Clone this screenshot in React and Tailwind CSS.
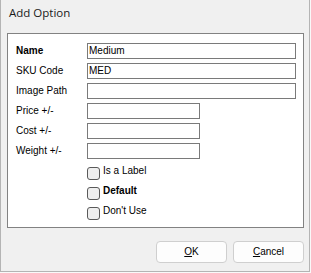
import React from 'react';

const fields = [
  { label: 'Name', value: 'Medium', bold: true, wide: true },
  { label: 'SKU Code', value: 'MED', wide: true },
  { label: 'Image Path', value: '', wide: true },
  { label: 'Price +/-', value: '' },
  { label: 'Cost +/-', value: '' },
  { label: 'Weight +/-', value: '' },
];

const checks = [
  { label: 'Is a Label' },
  { label: 'Default', bold: true },
  { label: "Don't Use" },
];

function Field({ label, value, bold, wide }) {
  return (
    <div className="flex h-[16px] items-center">
      <div className={`w-[71px] leading-[12px] text-black ${bold ? 'font-bold' : ''}`}>{label}</div>
      <div
        className={`flex h-[16px] items-center border border-[#7a7a7a] bg-white pl-[1px] leading-[12px] text-black ${
          wide ? 'w-[209px]' : 'w-[113px]'
        }`}
      >
        {value}
      </div>
    </div>
  );
}

function Check({ label, bold }) {
  return (
    <div className="flex h-[16px] items-start pl-[71px]">
      <div className="mt-[2px] h-[13px] w-[13px] rounded-[3px] border border-[#5a5a5a] bg-[#efefef]" />
      <div className={`ml-[3px] leading-[12px] text-black ${bold ? 'font-bold' : ''}`}>{label}</div>
    </div>
  );
}

export default function App() {
  return (
    <div className="h-[273px] w-[311px] bg-[#f9f9f9]">
      <div
        className="flex h-[272px] w-[310px] flex-col border-x border-b border-[#b4b4b4] bg-[#f0f0f0] text-[10px]"
        style={{ fontFamily: '"Liberation Sans", Arial, sans-serif' }}
      >
        <div
          className="pl-[8px] pt-[5px] text-[11.5px] leading-[16px] text-[#1a1a1a]"
          style={{ fontFamily: '"Open Sans", "Noto Sans", sans-serif' }}
        >
          Add Option
        </div>

        {/* group box */}
        <div className="ml-[6px] mt-[12px] h-[195px] w-[297px] border border-[#828282] bg-white pl-[8px] pt-[9px]">
          <div className="flex flex-col gap-[4px]">
            {fields.map((f) => (
              <Field key={f.label} {...f} />
            ))}
          </div>
          <div className="mt-[6px] flex flex-col gap-[4px]">
            {checks.map((c) => (
              <Check key={c.label} {...c} />
            ))}
          </div>
        </div>

        {/* buttons */}
        <div className="mt-[13px] flex justify-end gap-[6px] pr-[5px]">
          <button
            type="button"
            className="h-[22px] w-[71px] rounded-[4px] border border-[#cfcfcf] bg-[#fdfdfd] pb-[1px] text-[10px] leading-[12px] text-black"
          >
            <span className="underline underline-offset-[1px]">O</span>K
          </button>
          <button
            type="button"
            className="h-[22px] w-[71px] rounded-[4px] border border-[#cfcfcf] bg-[#fdfdfd] pb-[1px] text-[10px] leading-[12px] text-black"
          >
            <span className="underline underline-offset-[1px]">C</span>ancel
          </button>
        </div>
      </div>
    </div>
  );
}
